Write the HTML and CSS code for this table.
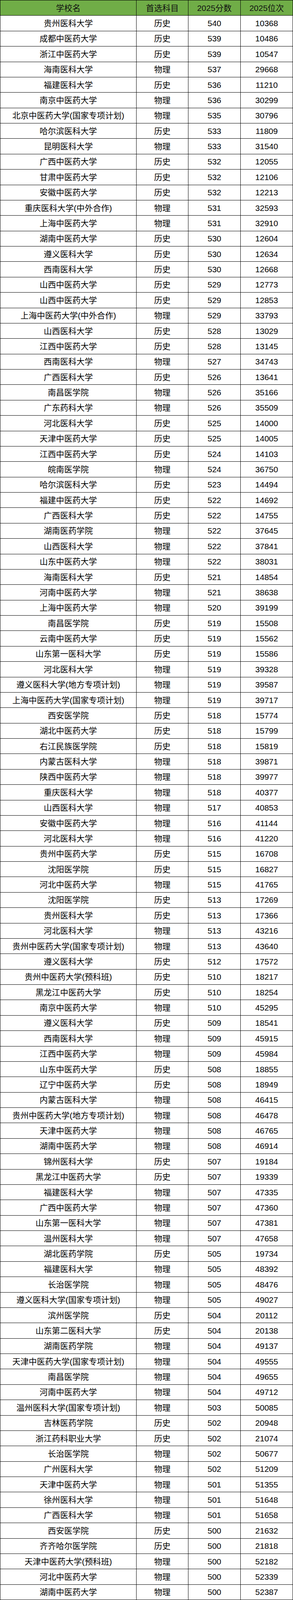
FILE: index.html
```html
<!DOCTYPE html>
<html lang="zh-CN">
<head>
<meta charset="utf-8">
<title>2025 医学院校分数线</title>
<link rel="stylesheet" href="styles.css">
</head>
<body>
<div class="sheet">
<div class="c h">学校名</div><div class="c h">首选科目</div><div class="c h">2025分数</div><div class="c h">2025位次</div>
<div class="c">贵州医科大学</div><div class="c">历史</div><div class="c">540</div><div class="c">10368</div>
<div class="c">成都中医药大学</div><div class="c">历史</div><div class="c">539</div><div class="c">10486</div>
<div class="c">浙江中医药大学</div><div class="c">历史</div><div class="c">539</div><div class="c">10547</div>
<div class="c">海南医科大学</div><div class="c">物理</div><div class="c">537</div><div class="c">29668</div>
<div class="c">福建医科大学</div><div class="c">历史</div><div class="c">536</div><div class="c">11210</div>
<div class="c">南京中医药大学</div><div class="c">物理</div><div class="c">536</div><div class="c">30299</div>
<div class="c">北京中医药大学(国家专项计划)</div><div class="c">物理</div><div class="c">535</div><div class="c">30796</div>
<div class="c">哈尔滨医科大学</div><div class="c">历史</div><div class="c">533</div><div class="c">11809</div>
<div class="c">昆明医科大学</div><div class="c">物理</div><div class="c">533</div><div class="c">31540</div>
<div class="c">广西中医药大学</div><div class="c">历史</div><div class="c">532</div><div class="c">12055</div>
<div class="c">甘肃中医药大学</div><div class="c">历史</div><div class="c">532</div><div class="c">12106</div>
<div class="c">安徽中医药大学</div><div class="c">历史</div><div class="c">532</div><div class="c">12213</div>
<div class="c">重庆医科大学(中外合作)</div><div class="c">物理</div><div class="c">531</div><div class="c">32593</div>
<div class="c">上海中医药大学</div><div class="c">物理</div><div class="c">531</div><div class="c">32910</div>
<div class="c">湖南中医药大学</div><div class="c">历史</div><div class="c">530</div><div class="c">12604</div>
<div class="c">遵义医科大学</div><div class="c">历史</div><div class="c">530</div><div class="c">12634</div>
<div class="c">西南医科大学</div><div class="c">历史</div><div class="c">530</div><div class="c">12668</div>
<div class="c">山西中医药大学</div><div class="c">历史</div><div class="c">529</div><div class="c">12773</div>
<div class="c">山西中医药大学</div><div class="c">历史</div><div class="c">529</div><div class="c">12853</div>
<div class="c">上海中医药大学(中外合作)</div><div class="c">物理</div><div class="c">529</div><div class="c">33793</div>
<div class="c">山西医科大学</div><div class="c">历史</div><div class="c">528</div><div class="c">13029</div>
<div class="c">江西中医药大学</div><div class="c">历史</div><div class="c">528</div><div class="c">13145</div>
<div class="c">西南医科大学</div><div class="c">物理</div><div class="c">527</div><div class="c">34743</div>
<div class="c">广西医科大学</div><div class="c">历史</div><div class="c">526</div><div class="c">13641</div>
<div class="c">南昌医学院</div><div class="c">物理</div><div class="c">526</div><div class="c">35166</div>
<div class="c">广东药科大学</div><div class="c">物理</div><div class="c">526</div><div class="c">35509</div>
<div class="c">河北医科大学</div><div class="c">历史</div><div class="c">525</div><div class="c">14000</div>
<div class="c">天津中医药大学</div><div class="c">历史</div><div class="c">525</div><div class="c">14005</div>
<div class="c">江西中医药大学</div><div class="c">历史</div><div class="c">524</div><div class="c">14103</div>
<div class="c">皖南医学院</div><div class="c">物理</div><div class="c">524</div><div class="c">36750</div>
<div class="c">哈尔滨医科大学</div><div class="c">历史</div><div class="c">523</div><div class="c">14494</div>
<div class="c">福建中医药大学</div><div class="c">历史</div><div class="c">522</div><div class="c">14692</div>
<div class="c">广西医科大学</div><div class="c">历史</div><div class="c">522</div><div class="c">14755</div>
<div class="c">湖南医药学院</div><div class="c">物理</div><div class="c">522</div><div class="c">37645</div>
<div class="c">山西医科大学</div><div class="c">物理</div><div class="c">522</div><div class="c">37841</div>
<div class="c">山东中医药大学</div><div class="c">物理</div><div class="c">522</div><div class="c">38031</div>
<div class="c">海南医科大学</div><div class="c">历史</div><div class="c">521</div><div class="c">14854</div>
<div class="c">河南中医药大学</div><div class="c">物理</div><div class="c">521</div><div class="c">38638</div>
<div class="c">上海中医药大学</div><div class="c">物理</div><div class="c">520</div><div class="c">39199</div>
<div class="c">南昌医学院</div><div class="c">历史</div><div class="c">519</div><div class="c">15508</div>
<div class="c">云南中医药大学</div><div class="c">历史</div><div class="c">519</div><div class="c">15562</div>
<div class="c">山东第一医科大学</div><div class="c">历史</div><div class="c">519</div><div class="c">15586</div>
<div class="c">河北医科大学</div><div class="c">物理</div><div class="c">519</div><div class="c">39328</div>
<div class="c">遵义医科大学(地方专项计划)</div><div class="c">物理</div><div class="c">519</div><div class="c">39587</div>
<div class="c">上海中医药大学(国家专项计划)</div><div class="c">物理</div><div class="c">519</div><div class="c">39717</div>
<div class="c">西安医学院</div><div class="c">历史</div><div class="c">518</div><div class="c">15774</div>
<div class="c">湖北中医药大学</div><div class="c">历史</div><div class="c">518</div><div class="c">15799</div>
<div class="c">右江民族医学院</div><div class="c">历史</div><div class="c">518</div><div class="c">15819</div>
<div class="c">内蒙古医科大学</div><div class="c">物理</div><div class="c">518</div><div class="c">39871</div>
<div class="c">陕西中医药大学</div><div class="c">物理</div><div class="c">518</div><div class="c">39977</div>
<div class="c">重庆医科大学</div><div class="c">物理</div><div class="c">518</div><div class="c">40377</div>
<div class="c">山西医科大学</div><div class="c">物理</div><div class="c">517</div><div class="c">40853</div>
<div class="c">安徽中医药大学</div><div class="c">物理</div><div class="c">516</div><div class="c">41144</div>
<div class="c">河北医科大学</div><div class="c">物理</div><div class="c">516</div><div class="c">41220</div>
<div class="c">贵州中医药大学</div><div class="c">历史</div><div class="c">515</div><div class="c">16708</div>
<div class="c">沈阳医学院</div><div class="c">历史</div><div class="c">515</div><div class="c">16827</div>
<div class="c">河北中医药大学</div><div class="c">物理</div><div class="c">515</div><div class="c">41765</div>
<div class="c">沈阳医学院</div><div class="c">历史</div><div class="c">513</div><div class="c">17269</div>
<div class="c">贵州医科大学</div><div class="c">历史</div><div class="c">513</div><div class="c">17366</div>
<div class="c">河北医科大学</div><div class="c">物理</div><div class="c">513</div><div class="c">43216</div>
<div class="c">贵州中医药大学(国家专项计划)</div><div class="c">物理</div><div class="c">513</div><div class="c">43640</div>
<div class="c">遵义医科大学</div><div class="c">历史</div><div class="c">512</div><div class="c">17572</div>
<div class="c">贵州中医药大学(预科班)</div><div class="c">历史</div><div class="c">510</div><div class="c">18217</div>
<div class="c">黑龙江中医药大学</div><div class="c">历史</div><div class="c">510</div><div class="c">18254</div>
<div class="c">南京中医药大学</div><div class="c">物理</div><div class="c">510</div><div class="c">45295</div>
<div class="c">遵义医科大学</div><div class="c">历史</div><div class="c">509</div><div class="c">18541</div>
<div class="c">西南医科大学</div><div class="c">物理</div><div class="c">509</div><div class="c">45915</div>
<div class="c">江西中医药大学</div><div class="c">物理</div><div class="c">509</div><div class="c">45984</div>
<div class="c">山东中医药大学</div><div class="c">历史</div><div class="c">508</div><div class="c">18855</div>
<div class="c">辽宁中医药大学</div><div class="c">历史</div><div class="c">508</div><div class="c">18949</div>
<div class="c">内蒙古医科大学</div><div class="c">物理</div><div class="c">508</div><div class="c">46415</div>
<div class="c">贵州中医药大学(地方专项计划)</div><div class="c">物理</div><div class="c">508</div><div class="c">46478</div>
<div class="c">天津中医药大学</div><div class="c">物理</div><div class="c">508</div><div class="c">46765</div>
<div class="c">湖南中医药大学</div><div class="c">物理</div><div class="c">508</div><div class="c">46914</div>
<div class="c">锦州医科大学</div><div class="c">历史</div><div class="c">507</div><div class="c">19184</div>
<div class="c">黑龙江中医药大学</div><div class="c">历史</div><div class="c">507</div><div class="c">19339</div>
<div class="c">福建医科大学</div><div class="c">物理</div><div class="c">507</div><div class="c">47335</div>
<div class="c">广西中医药大学</div><div class="c">物理</div><div class="c">507</div><div class="c">47360</div>
<div class="c">山东第一医科大学</div><div class="c">物理</div><div class="c">507</div><div class="c">47381</div>
<div class="c">温州医科大学</div><div class="c">物理</div><div class="c">507</div><div class="c">47658</div>
<div class="c">湖北医药学院</div><div class="c">历史</div><div class="c">505</div><div class="c">19734</div>
<div class="c">福建医科大学</div><div class="c">物理</div><div class="c">505</div><div class="c">48392</div>
<div class="c">长治医学院</div><div class="c">物理</div><div class="c">505</div><div class="c">48476</div>
<div class="c">遵义医科大学(国家专项计划)</div><div class="c">物理</div><div class="c">505</div><div class="c">49027</div>
<div class="c">滨州医学院</div><div class="c">历史</div><div class="c">504</div><div class="c">20112</div>
<div class="c">山东第二医科大学</div><div class="c">历史</div><div class="c">504</div><div class="c">20138</div>
<div class="c">湖南医药学院</div><div class="c">物理</div><div class="c">504</div><div class="c">49137</div>
<div class="c">天津中医药大学(国家专项计划)</div><div class="c">物理</div><div class="c">504</div><div class="c">49555</div>
<div class="c">南昌医学院</div><div class="c">物理</div><div class="c">504</div><div class="c">49655</div>
<div class="c">河南中医药大学</div><div class="c">物理</div><div class="c">504</div><div class="c">49712</div>
<div class="c">温州医科大学(国家专项计划)</div><div class="c">物理</div><div class="c">503</div><div class="c">50085</div>
<div class="c">吉林医药学院</div><div class="c">历史</div><div class="c">502</div><div class="c">20948</div>
<div class="c">浙江药科职业大学</div><div class="c">历史</div><div class="c">502</div><div class="c">21074</div>
<div class="c">长治医学院</div><div class="c">物理</div><div class="c">502</div><div class="c">50677</div>
<div class="c">广州医科大学</div><div class="c">物理</div><div class="c">502</div><div class="c">51209</div>
<div class="c">天津中医药大学</div><div class="c">物理</div><div class="c">501</div><div class="c">51355</div>
<div class="c">徐州医科大学</div><div class="c">物理</div><div class="c">501</div><div class="c">51648</div>
<div class="c">广西医科大学</div><div class="c">物理</div><div class="c">501</div><div class="c">51658</div>
<div class="c">西安医学院</div><div class="c">历史</div><div class="c">500</div><div class="c">21632</div>
<div class="c">齐齐哈尔医学院</div><div class="c">历史</div><div class="c">500</div><div class="c">21818</div>
<div class="c">天津中医药大学(预科班)</div><div class="c">物理</div><div class="c">500</div><div class="c">52182</div>
<div class="c">河北中医药大学</div><div class="c">物理</div><div class="c">500</div><div class="c">52339</div>
<div class="c">湖南中医药大学</div><div class="c">物理</div><div class="c">500</div><div class="c">52387</div>
</div>
</body>
</html>
```

FILE: styles.css
```css
html, body {
  margin: 0;
  padding: 0;
  background: #ffffff;
}

/* The page is photographed through a 4096px-tall viewport, so the
   40px spreadsheet rows are laid out at 40 * 4096 / 4161 px. */
.sheet {
  display: grid;
  grid-template-columns: 349px 133px 134px 134px;
  grid-auto-rows: 39.375px;
  width: 751px;
  box-sizing: border-box;
  border-top: 1px solid #000;
  border-left: 1px solid #000;
  font-family: "Liberation Sans", "Noto Sans CJK SC", sans-serif;
  font-size: 21px;
  color: #000;
}

.c {
  box-sizing: border-box;
  border-right: 1px solid #000;
  border-bottom: 1px solid #000;
  display: flex;
  align-items: center;
  justify-content: center;
  white-space: nowrap;
  line-height: 1;
}

.h {
  background: #70ad47;
  color: #111;
}
```
